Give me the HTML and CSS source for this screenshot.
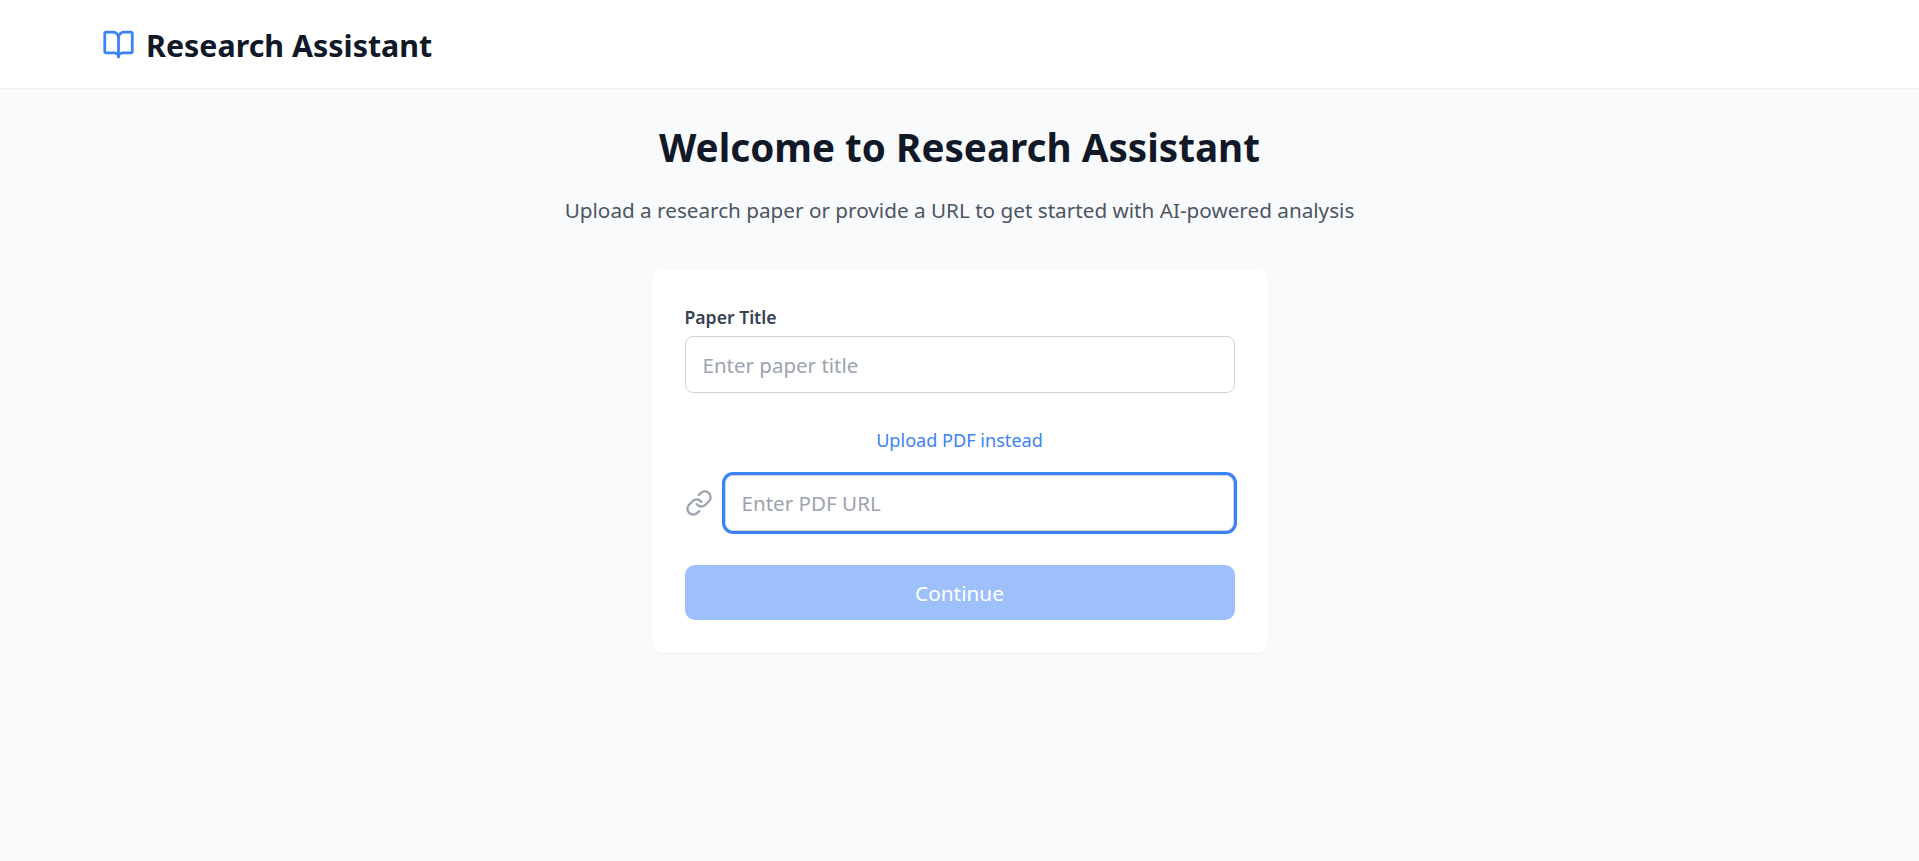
FILE: index.html
```html
<!DOCTYPE html>
<html lang="en">
<head>
    <meta charset="UTF-8">
    <meta name="viewport" content="width=device-width, initial-scale=1.0">
    <title>Research Assistant</title>
    <link rel="stylesheet" href="styles.css">
</head>
<body>
    <header class="topbar">
        <svg class="logo" viewBox="0 0 24 24" fill="none" stroke="currentColor" stroke-width="2" stroke-linecap="round" stroke-linejoin="round">
            <path d="M12 7v14"/>
            <path d="M3 18a1 1 0 0 1-1-1V4a1 1 0 0 1 1-1h5a4 4 0 0 1 4 4 4 4 0 0 1 4-4h5a1 1 0 0 1 1 1v13a1 1 0 0 1-1 1h-6a3 3 0 0 0-3 3 3 3 0 0 0-3-3z"/>
        </svg>
        <span class="brand">Research Assistant</span>
    </header>

    <main class="page">
        <h1>Welcome to Research Assistant</h1>
        <p class="intro">Upload a research paper or provide a URL to get started with AI-powered analysis</p>

        <form class="card">
            <label class="field-label" for="title">Paper Title</label>
            <input class="text-input" type="text" id="title" placeholder="Enter paper title">

            <a class="switch-link" href="#">Upload PDF instead</a>

            <div class="url-row">
                <svg class="link-icon" viewBox="0 0 24 24" fill="none" stroke="currentColor" stroke-width="2" stroke-linecap="round" stroke-linejoin="round">
                    <path d="M10 13a5 5 0 0 0 7.54.54l3-3a5 5 0 0 0-7.07-7.07l-1.72 1.71"/>
                    <path d="M14 11a5 5 0 0 0-7.54-.54l-3 3a5 5 0 0 0 7.07 7.07l1.71-1.71"/>
                </svg>
                <input class="text-input url-input" type="text" id="url" placeholder="Enter PDF URL">
            </div>

            <button class="submit" type="button">Continue</button>
        </form>
    </main>
</body>
</html>
```

FILE: styles.css
```css
* {
    box-sizing: border-box;
}

body {
    margin: 0;
    min-height: 861px;
    background-color: #f9fafb;
    color: #111827;
    font-family: "Noto Sans", "Open Sans", sans-serif;
}

.topbar {
    display: flex;
    align-items: center;
    gap: 11px;
    height: 89px;
    padding: 0 102px;
    background-color: #fff;
    border-bottom: 1px solid #f0f1f3;
}

.logo {
    width: 33px;
    height: 33px;
    margin-top: 1px;
    color: #3b82f6;
}

.brand {
    font-size: 30.4px;
    font-weight: 700;
    line-height: 42px;
    padding-top: 4px;
}

.page {
    display: flex;
    flex-direction: column;
    align-items: center;
}

h1 {
    margin: 29px 0 0;
    font-size: 38.65px;
    line-height: 58px;
    font-weight: 700;
}

.intro {
    margin: 18px 0 0;
    font-size: 20.7px;
    line-height: 32px;
    color: #4b5563;
}

.card {
    display: flex;
    flex-direction: column;
    width: 616px;
    height: 383px;
    margin-top: 44px;
    padding: 35px 33px 33px;
    background-color: #fff;
    border-radius: 12px;
    box-shadow: 0 1px 2px rgba(0, 0, 0, 0.04);
}

.field-label {
    font-size: 17.6px;
    line-height: 24px;
    font-weight: 600;
    color: #374151;
    margin-bottom: 7px;
}

.text-input {
    width: 100%;
    height: 57px;
    padding: 0 17px;
    font-family: inherit;
    font-size: 20.5px;
    color: #111827;
    background-color: #fff;
    border: 1px solid #d1d5db;
    border-radius: 8px;
    outline: none;
}

.text-input::placeholder {
    color: #9ca3af;
}

.switch-link {
    align-self: center;
    margin-top: 33px;
    font-size: 18.1px;
    line-height: 28px;
    color: #3b82f6;
    text-decoration: none;
}

.url-row {
    display: flex;
    align-items: center;
    gap: 12px;
    margin-top: 21px;
}

.link-icon {
    flex: none;
    width: 28px;
    height: 28px;
    color: #9ca3af;
}

.url-input {
    flex: 1;
    height: 56px;
    margin-right: 1px;
    padding: 0 16px;
    font-size: 20.6px;
    border-radius: 8px;
    box-shadow: 0 0 0 3px #3b82f6;
}

.submit {
    height: 55px;
    margin-top: 34px;
    font-family: inherit;
    font-size: 20.8px;
    font-weight: 400;
    color: #fff;
    background-color: #9dc0fa;
    border: none;
    border-radius: 10px;
}
```
